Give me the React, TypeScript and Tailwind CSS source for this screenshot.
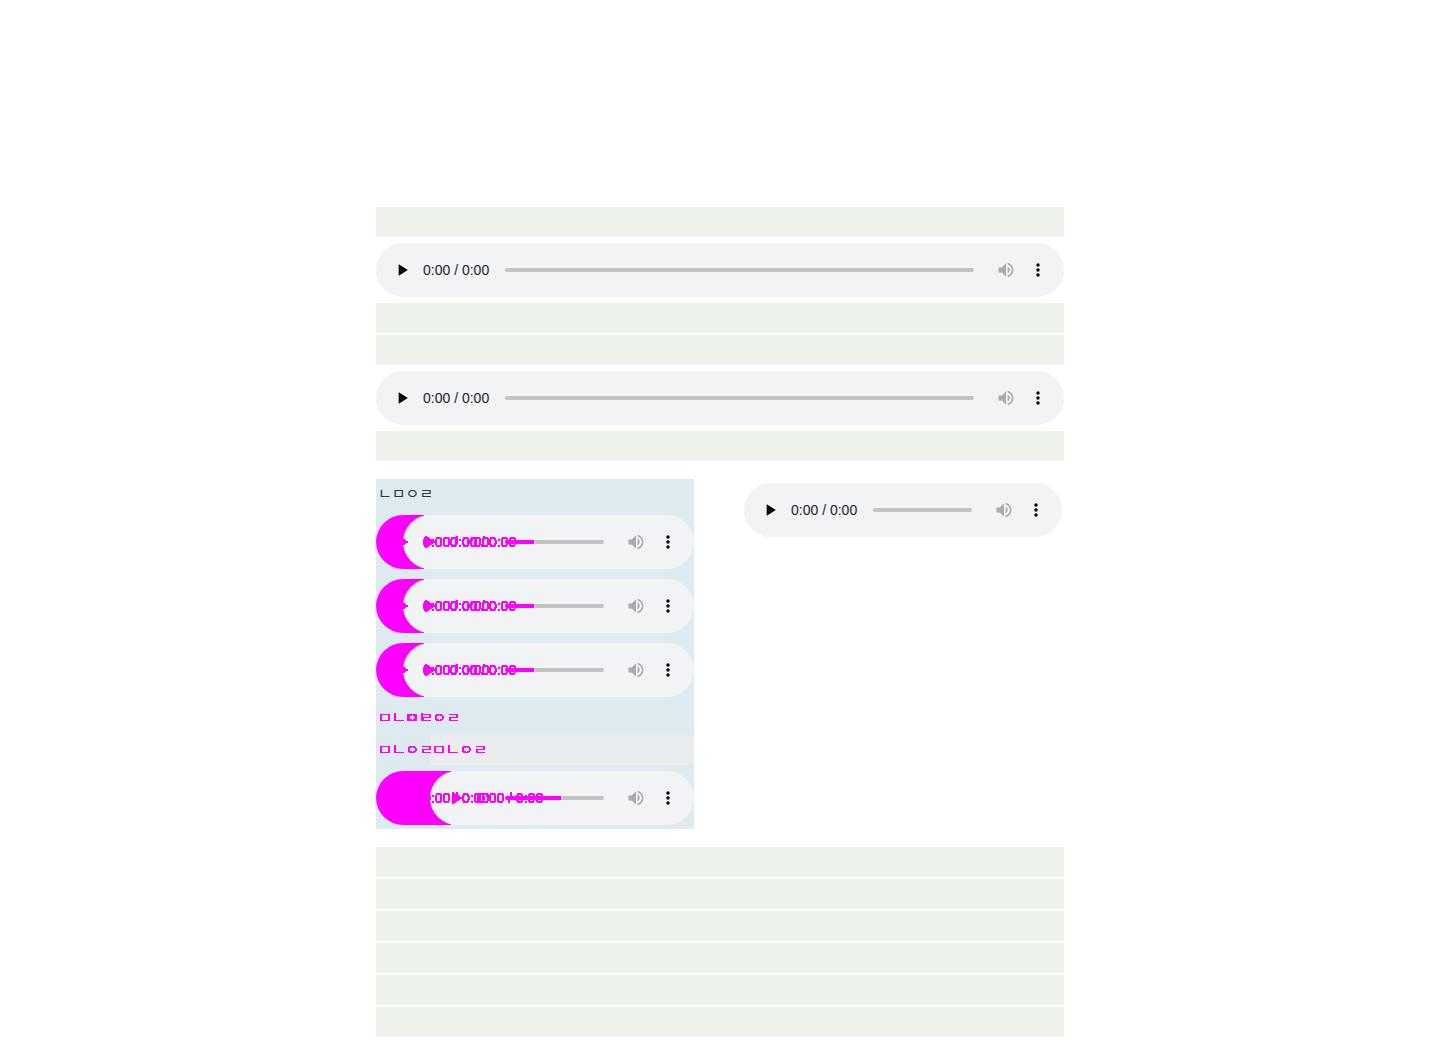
import React from "react";

type PlayerProps = { label: string; diff?: "near" | "far" };

function PlayIcon() {
  return (
    <svg viewBox="0 0 24 24" className="size-5" fill="currentColor" aria-hidden="true">
      <path d="M8 5v14l11-7z" />
    </svg>
  );
}

/* Turns every partly covered pixel of changed content into a solid one. */
function SolidFilter() {
  return (
    <svg className="absolute size-0" aria-hidden="true">
      <filter id="solid" colorInterpolationFilters="sRGB">
        <feComponentTransfer>
          <feFuncA type="discrete" tableValues="0 1 1 1 1 1 1 1 1 1 1 1 1 1 1 1" />
        </feComponentTransfer>
      </filter>
    </svg>
  );
}

function Player({ label, diff }: PlayerProps) {
  const far = diff === "far";
  return (
    <div
      role="group"
      aria-label={label}
      className={`relative flex h-[54px] items-center overflow-hidden rounded-full bg-[#f1f3f4] px-4 ${
        diff ? "text-[#ff00ff]" : "text-black"
      }`}
    >
      {diff && (
        <>
          <div className={`absolute inset-y-0 left-0 bg-[#ff00ff] ${far ? "w-[75px]" : "w-12"}`} />
          <div
            className={`absolute inset-y-0 right-0 rounded-l-full bg-[#f1f3f4] ${far ? "left-[54px]" : "left-[27px]"}`}
          />
        </>
      )}
      <button type="button" aria-label="Play" className={`relative size-5 shrink-0 ${diff ? "[filter:url(#solid)]" : ""}`}>
        <PlayIcon />
      </button>
      <span
        className={`relative ml-[11px] w-[66px] shrink-0 whitespace-nowrap text-sm ${
          diff ? "[filter:url(#solid)]" : "text-[#202124]"
        }`}
      >
        0:00 / 0:00
      </span>
      <div className="relative ml-4 mr-[22px] flex min-w-0 flex-1 items-center">
        <input
          type="range"
          aria-label="Seek"
          defaultValue={0}
          className="h-1 w-full min-w-0 appearance-none rounded-full bg-[#c1c3c3] [&::-webkit-slider-thumb]:appearance-none"
        />
        {diff && <div className={`absolute left-0 h-1 rounded-l-full bg-[#ff00ff] ${far ? "w-14" : "w-[29px]"}`} />}
      </div>
      {diff && (
        <div
          aria-hidden="true"
          className={`absolute inset-y-0 flex items-center [filter:url(#solid)] ${far ? "left-[70px]" : "left-[43px]"}`}
        >
          <PlayIcon />
          <span className="ml-[11px] whitespace-nowrap text-sm">0:00 / 0:00</span>
        </div>
      )}
      <button type="button" aria-label="Volume" className="relative size-5 shrink-0 text-[#aaabac]">
        <svg viewBox="0 0 24 24" className="size-5" fill="currentColor" aria-hidden="true">
          <path d="M3 9v6h4l5 5V4L7 9H3zm13.5 3c0-1.77-1.02-3.29-2.5-4.03v8.05c1.48-.73 2.5-2.25 2.5-4.02zM14 3.23v2.06c2.89.86 5 3.54 5 6.71s-2.11 5.85-5 6.71v2.06c4.01-.91 7-4.49 7-8.77s-2.99-7.86-7-8.77z" />
        </svg>
      </button>
      <button type="button" aria-label="More options" className="relative ml-3 size-5 shrink-0 text-black">
        <svg viewBox="0 0 24 24" className="size-5" fill="currentColor" aria-hidden="true">
          <path d="M12 8c1.1 0 2-.9 2-2s-.9-2-2-2-2 .9-2 2 .9 2 2 2zm0 2c-1.1 0-2 .9-2 2s.9 2 2 2 2-.9 2-2-.9-2-2-2zm0 6c-1.1 0-2 .9-2 2s.9 2 2 2 2-.9 2-2-.9-2-2-2z" />
        </svg>
      </button>
    </div>
  );
}

function Bar() {
  return <div className="h-[30px] bg-[#edf2eb]" />;
}

export default function App() {
  return (
    <main className="min-h-screen bg-white px-4 pb-3 pt-[207px] font-['Liberation_Sans','Noto_Sans_CJK_KR',sans-serif]">
      <SolidFilter />
      <div className="mx-auto max-w-[688px]">
        <div className="flex flex-col gap-1.5">
          <Bar />
          <Player label="Audio 1" />
          <div className="flex flex-col gap-0.5">
            <Bar />
            <Bar />
          </div>
          <Player label="Audio 2" />
          <Bar />
        </div>

        <div className="my-[18px] grid grid-cols-2 items-start gap-[50px] pr-0.5">
          <section className="bg-[#ddeaef] pb-1 text-[15px] leading-[30px]">
            <p className="pl-0.5 text-[#37352f]">ㄴㅁㅇㄹ</p>
            <div className="mt-1.5 flex flex-col gap-2.5">
              <Player label="Audio 3" diff="near" />
              <Player label="Audio 4" diff="near" />
              <Player label="Audio 5" diff="near" />
            </div>
            <p className="relative mt-1.5 pl-0.5 text-[#ff00ff] [filter:url(#solid)]">
              ㅁㄴㅇㄹ
              <span aria-hidden="true" className="absolute left-[29px] top-0">
                ㅁㄴㅇㄹ
              </span>
            </p>
            <div className="relative mb-1.5 mt-0.5 text-[#ff00ff]">
              <div className="absolute inset-y-0 left-[54px] right-0 bg-[#ebeced]" />
              <p className="relative pl-0.5 [filter:url(#solid)]">
                ㅁㄴㅇㄹ
                <span aria-hidden="true" className="absolute left-14 top-0">
                  ㅁㄴㅇㄹ
                </span>
              </p>
            </div>
            <Player label="Audio 6" diff="far" />
          </section>
          <div className="pt-1">
            <Player label="Audio 7" />
          </div>
        </div>

        <div className="flex flex-col gap-0.5">
          <Bar />
          <Bar />
          <Bar />
          <Bar />
          <Bar />
          <Bar />
        </div>
      </div>
    </main>
  );
}
